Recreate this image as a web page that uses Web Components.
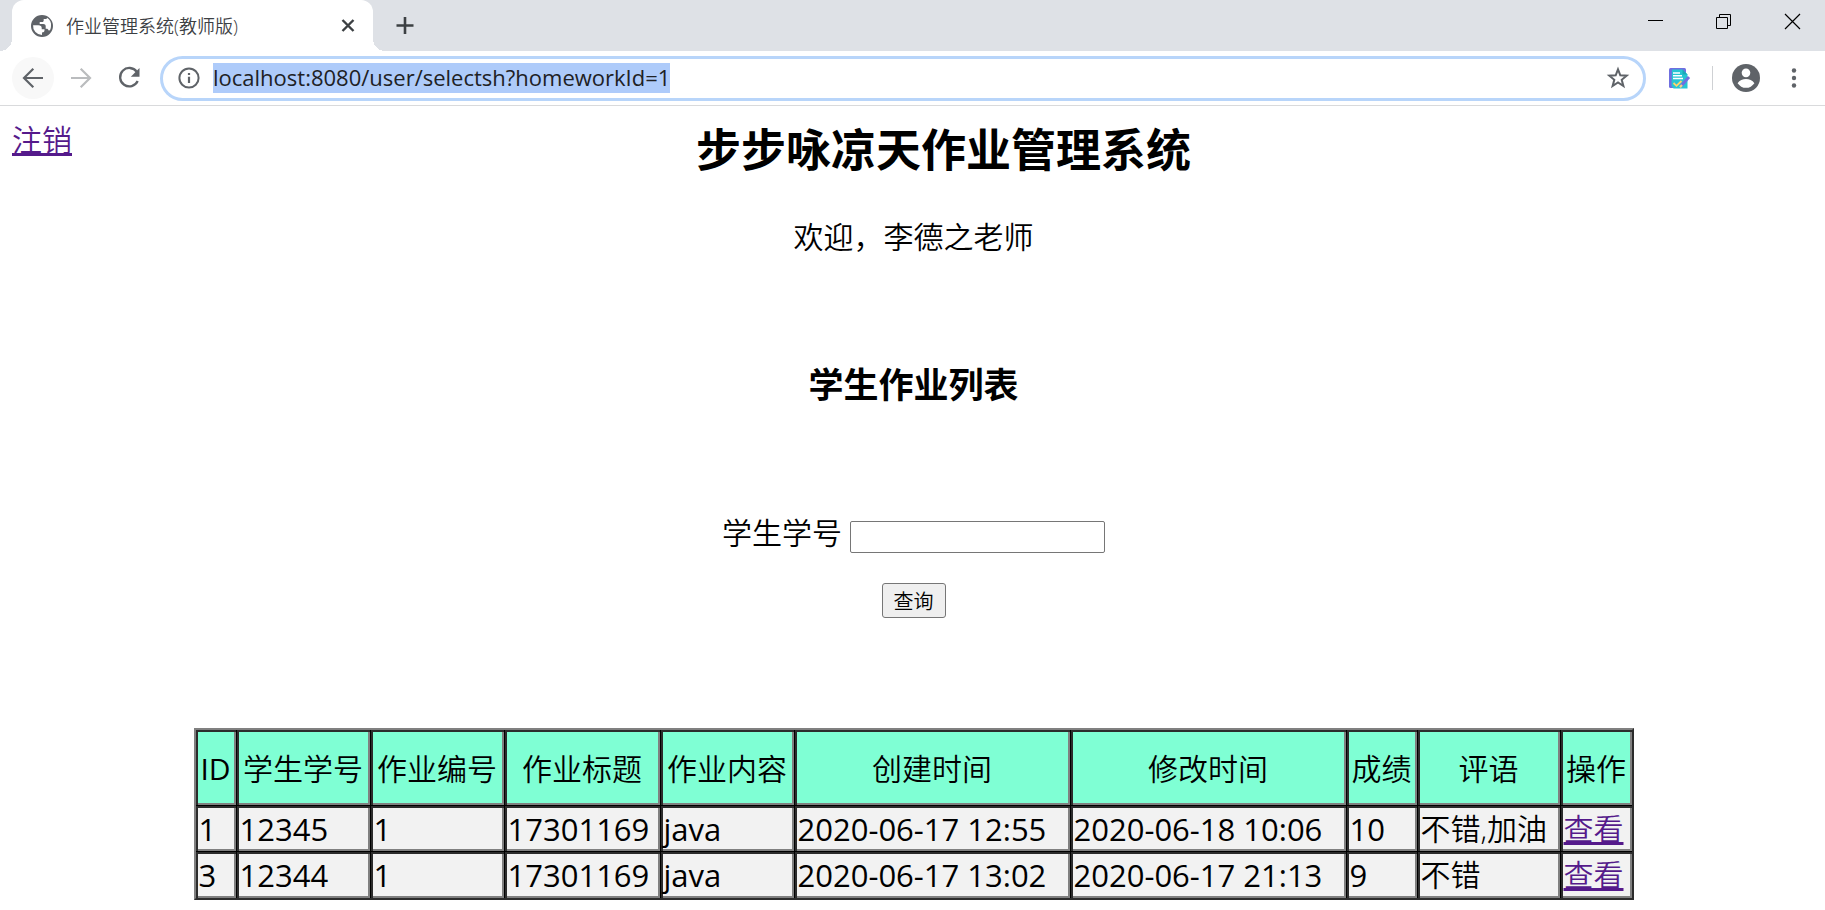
<!DOCTYPE html>
<html lang="zh-CN">
<head>
<meta charset="utf-8">
<title>作业管理系统(教师版)</title>
<style>
  html, body { margin: 0; background: #fff; }
  body { font-family: "Open Sans", "Noto Sans CJK SC", sans-serif; color: #000; }
</style>
</head>
<body>
<browser-window>
  <browser-tab slot="tab">作业管理系统(教师版)</browser-tab>
  <browser-toolbar slot="toolbar" url="localhost:8080/user/selectsh?homeworkId=1"></browser-toolbar>
  <homework-page>
    <page-header slot="header" heading="步步咏凉天作业管理系统">欢迎，李德之老师</page-header>
    <student-search slot="search"></student-search>
    <homework-table></homework-table>
  </homework-page>
</browser-window>

<script>
function define(name, html, setup) {
  customElements.define(name, class extends HTMLElement {
    connectedCallback() {
      if (this.shadowRoot) return;
      const root = this.attachShadow({ mode: 'open' });
      const template = document.createElement('template');
      template.innerHTML = html;
      root.append(template.content.cloneNode(true));
      if (setup) setup(this, root);
    }
  });
}

define('browser-window', `
  <style>
    :host { display: block; }
    .strip { display: flex; height: 51px; background: #dee1e6; padding-left: 12px; box-sizing: border-box; }
    .add { align-self: center; margin-left: 20px; }
    .spacer { flex: 1; }
  </style>
  <div class="strip">
    <slot name="tab"></slot>
    <icon-button class="add" kind="plus" label="打开新的标签页"></icon-button>
    <div class="spacer"></div>
    <window-controls></window-controls>
  </div>
  <slot name="toolbar"></slot>
  <slot></slot>
`);

define('browser-tab', `
  <style>
    :host { display: flex; align-items: center; position: relative; width: 361px; box-sizing: border-box;
      padding: 0 13px 0 18px; background: #fff; border-radius: 12px 12px 0 0; font-size: 18px; color: #3c4043; }
    :host::before, :host::after { content: ""; position: absolute; bottom: 0; width: 12px; height: 12px; }
    :host::before { right: 100%; background: radial-gradient(circle at 0 0, transparent 12px, #fff 12px); }
    :host::after { left: 100%; background: radial-gradient(circle at 100% 0, transparent 12px, #fff 12px); }
    svg { width: 24px; height: 24px; margin-right: 12px; fill: #5f6368; }
    .title { flex: 1; line-height: 24px; white-space: nowrap; font-weight: 350; }
  </style>
  <svg viewBox="0 0 24 24" aria-hidden="true">
    <path d="M12 1a11 11 0 1 0 0 22 11 11 0 0 0 0-22zm0 20a9 9 0 0 1-8.9-9.8h5.4c2 0 3.2.8 3.2 2.6v1.4h2.8v1.4c0 1.3-1 1.8-2.5 1.8v2.6zm8-4.8-1.4.2c-.3-1-1-1.7-2-1.7h-.9v-2.6c0-1.5-1-2.2-2.4-2.2H9.700v-2h2.500c1.100 0 1.500-.6 1.500-1.500V5h1.800c1 0 1.500-.6 1.500-1.300 3 1.700 4.500 5 4 8.300a9 9 0 0 1-1 4.200z" fill-rule="evenodd"/>
  </svg>
  <span class="title"><slot></slot></span>
  <icon-button kind="cross" label="关闭标签页"></icon-button>
`);

const ICONS = {
  plus: '<path d="M12 3v17M3.500 11.500h17" stroke-width="2.600"/>',
  cross: '<path d="M6.500 6l11 11M17.500 6l-11 11" stroke-width="2.400"/>',
  back: '<path d="M22 12H3M12.300 2.700 3 12l9.300 9.300" stroke-width="2.200"/>',
  forward: '<path d="M2 12h19M11.700 2.700 21 12l-9.300 9.300" stroke-width="2.200"/>',
  reload: '<path d="M19.800 5.800A9.200 9.200 0 1 0 20.700 15" stroke-width="2.300"/><path d="M22.500 2v8.700h-8.700z" fill="currentColor" stroke="none"/>',
  info: '<circle cx="12" cy="12" r="9.600" stroke-width="2"/><path d="M12 10.700v6.300M12 7v2.100" stroke-width="2.200"/>',
  star: '<path d="M12 3.300l2.300 6 6.400.4-5 4.100 1.700 6.200-5.400-3.500L6.600 20l1.700-6.200-5-4.100 6.400-.4z" stroke-width="2"/>',
  note: '<rect x="2" y="2" width="17" height="20" rx="1.500" fill="#6f6fe0" stroke="none"/><path d="M5 3.500h10.500l5 5V22.500H6.500L4.500 20z" fill="#27c5d2" stroke="none"/><path d="M15.500 3.500l5 5h-5z" fill="#1aa9b8" stroke="none"/><path d="M6 7h7M6 9.800h9M6 12.500h10" stroke="#fff" stroke-width="1.500"/><path d="M6.500 17l3 2.800 5-4.800" stroke="#ffd46b" stroke-width="1.800"/><path d="M14 20l8-9" stroke="#6f6fe0" stroke-width="3"/><path d="M13 21.300l2-2.200" stroke="#f7d18a" stroke-width="2.200"/>',
  account: '<circle cx="12" cy="12" r="12" fill="currentColor" stroke="none"/><circle cx="12" cy="7.600" r="3.700" fill="#fff" stroke="none"/><path d="M4.800 16.600c1.600-2.600 4.500-3.700 7.200-3.700s5.600 1.100 7.200 3.700a8.700 8.700 0 0 1-14.400 0z" fill="#fff" stroke="none"/>',
  dots: '<g fill="currentColor" stroke="none"><circle cx="12" cy="4.500" r="2.200"/><circle cx="12" cy="12" r="2.200"/><circle cx="12" cy="19.500" r="2.200"/></g>',
  minimize: '<path d="M5 12.500h15" stroke-width="1"/>',
  restore: '<path d="M4.500 9.500h11v11h-11zM7.500 9.500v-3h11v11h-3" stroke-width="1"/>',
  close: '<path d="M4 6l15 15M19 6l-15 15" stroke-width="1.200"/>'
};

define('icon-button', `
  <style>
    :host { display: inline-flex; flex: none; color: #3c4043; --size: 24px; }
    button { all: unset; display: flex; align-items: center; justify-content: center; }
    svg { width: var(--size); height: var(--size); fill: none; stroke: currentColor; }
  </style>
  <button type="button"><svg viewBox="0 0 24 24" aria-hidden="true"></svg></button>
`, (host, root) => {
  root.querySelector('button').setAttribute('aria-label', host.getAttribute('label'));
  root.querySelector('svg').innerHTML = ICONS[host.getAttribute('kind')];
});

define('window-controls', `
  <style>
    :host { display: flex; align-items: flex-start; gap: 45px; padding: 8px 20px 0 0; }
    icon-button { color: #000; }
  </style>
  <icon-button kind="minimize" label="最小化"></icon-button>
  <icon-button kind="restore" label="向下还原"></icon-button>
  <icon-button kind="close" label="关闭"></icon-button>
`);

define('browser-toolbar', `
  <style>
    :host { display: flex; align-items: center; height: 55px; box-sizing: border-box; padding: 0 19px 0 12px;
      background: #fff; border-bottom: 1px solid #d9dadc; }
    icon-button { color: #5f6368; }
    .nav { width: 42px; height: 42px; margin-right: 6px; align-items: center; justify-content: center; border-radius: 50%; }
    .current { background: #f8f8f8; }
    .off { color: #babcbe; }
    .omnibox { flex: 1; display: flex; align-items: center; height: 45px; box-sizing: border-box; margin: 0 21px 0 4px;
      padding: 0 13px 0 14px; border: 3px solid #b8d5fa; border-radius: 23px; }
    .field { flex: 1; display: flex; margin-left: 12px; }
    input { field-sizing: content; height: 30px; box-sizing: border-box; padding: 0 0 2px; border: 0; outline: 0;
      background: #aecbfa; color: #202124; font: 22px/28px "Open Sans", "Noto Sans CJK SC", sans-serif; }
    .rule { width: 1px; height: 24px; margin: 0 19px 0 21px; background: #cfd1d4; }
    .account { --size: 28px; margin-right: 22px; }
  </style>
  <icon-button class="nav current" kind="back" label="后退"></icon-button>
  <icon-button class="nav off" kind="forward" label="前进"></icon-button>
  <icon-button class="nav" kind="reload" label="重新加载"></icon-button>
  <div class="omnibox">
    <icon-button kind="info" label="查看网站信息"></icon-button>
    <div class="field"><input type="text" aria-label="地址和搜索栏"></div>
    <icon-button kind="star" label="为此标签页添加书签"></icon-button>
  </div>
  <icon-button kind="note" label="扩展程序"></icon-button>
  <div class="rule"></div>
  <icon-button class="account" kind="account" label="用户"></icon-button>
  <icon-button kind="dots" label="菜单"></icon-button>
`, (host, root) => { root.querySelector('input').value = host.getAttribute('url'); });

define('homework-page', `
  <style>
    :host { display: block; padding: 14px 10px 10px 12px; font-size: 30px; line-height: 40px; }
    h3 { margin: 103px 0; font-size: 35px; line-height: 50px; text-align: center; }
  </style>
  <slot name="header"></slot>
  <h3>学生作业列表</h3>
  <slot name="search"></slot>
  <slot></slot>
`);

define('page-header', `
  <style>
    :host { display: block; text-align: center; }
    .top { display: flex; align-items: flex-start; }
    a { color: #551a8b; font-weight: 350; }
    h2 { flex: 1; margin: 0; font-size: 45px; line-height: 60px; }
    p { margin: 37px 0 0; font-weight: 350; }
  </style>
  <div class="top"><a href="#logout">注销</a><h2></h2></div>
  <p><slot></slot></p>
`, (host, root) => { root.querySelector('h2').textContent = host.getAttribute('heading'); });

define('student-search', `
  <style>
    :host { display: block; }
    form { display: flex; flex-direction: column; align-items: center; gap: 30px; }
    .row { display: flex; align-items: flex-end; gap: 8px; }
    label { font-weight: 350; }
    input { width: 255px; height: 32px; box-sizing: border-box; border: 1px solid #767676; border-radius: 2px; padding: 1px 3px; font: inherit; font-size: 20px; }
    button { width: 64px; height: 35px; padding: 0; border: 1px solid #767676; border-radius: 3px; background: #efefef;
      font: 350 20px/30px "Noto Sans CJK SC", sans-serif; color: #000; }
  </style>
  <form onsubmit="return false">
    <div class="row"><label for="number">学生学号</label><input id="number" type="text"></div>
    <button>查询</button>
  </form>
`);

const COLUMNS = [['ID', 41], ['学生学号', 134], ['作业编号', 134], ['作业标题', 156], ['作业内容', 134],
  ['创建时间', 276], ['修改时间', 276], ['成绩', 71], ['评语', 143], ['操作', 71]];
const ROWS = [
  ['1', '12345', '1', '17301169', 'java', '2020-06-17 12:55', '2020-06-18 10:06', '10', '不错,加油'],
  ['3', '12344', '1', '17301169', 'java', '2020-06-17 13:02', '2020-06-17 21:13', '9', '不错']
];

define('homework-table', `
  <style>
    :host { display: block; margin-top: 110px; }
    table { width: 1440px; max-width: 100%; margin: 0 auto; table-layout: fixed; border-spacing: 0; box-sizing: border-box;
      border: 2px solid; border-color: #808080 #2c2c2c #2c2c2c #808080; white-space: nowrap; }
    th, td { box-sizing: border-box; border: 0 solid #000; border-width: 0 1px 1px 0;
      box-shadow: inset 2px 2px #2c2c2c, inset -2px -2px #808080; }
    th:last-child, td:last-child { border-right: 0; }
    tbody tr:last-child td { border-bottom: 0; }
    th { height: 76px; padding: 2px 0 0; background: #7fffd4; font-weight: 350; text-align: center; }
    th:first-child { font-weight: 400; }
    td { height: 46px; padding: 0 0 0 3px; background: #f2f2f2; }
    td.text { font-weight: 350; }
    td.number { font-size: 31px; }
    a { color: #551a8b; }
  </style>
  <table><colgroup></colgroup><thead><tr></tr></thead><tbody></tbody></table>
`, (host, root) => {
  root.querySelector('colgroup').innerHTML = COLUMNS.map(([, width]) => `<col style="width:${width}px">`).join('');
  root.querySelector('thead tr').innerHTML = COLUMNS.map(([name]) => `<th scope="col">${name}</th>`).join('');
  root.querySelector('tbody').innerHTML = ROWS.map(row => '<tr>' +
    row.map((value, i) => `<td class="${i === 8 ? 'text' : 'number'}">${value}</td>`).join('') +
    `<td class="text"><a href="#homework-${row[0]}">查看</a></td></tr>`).join('');
});
</script>
</body>
</html>
